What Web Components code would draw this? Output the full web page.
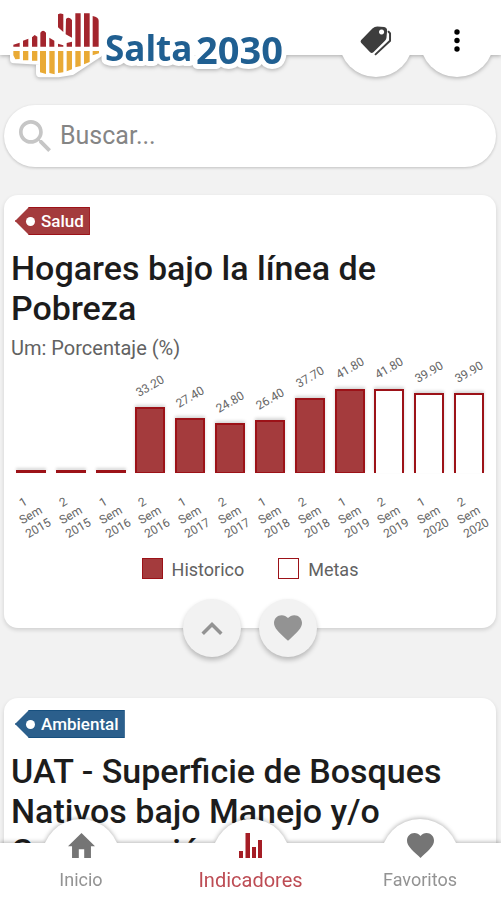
<!DOCTYPE html>
<html lang="es">
<head>
<meta charset="utf-8">
<meta name="viewport" content="width=device-width, initial-scale=1">
<title>Salta 2030</title>
<style>
  body {
    margin: 0;
    background: #f2f2f2;
    font-family: Roboto, "Liberation Sans", sans-serif;
    --red: #a43b3d;
    --red-dark: #9c1218;
    --blue: #2b5f8c;
    --blue-dark: #17507f;
  }
</style>
</head>
<body>
<salta-app>
  <salta-header slot="header">
    <round-button label="Categorías">
      <svg viewBox="178 73 98 94" width="32" height="31">
        <path fill="#3d3d3d" fill-rule="evenodd" d="M181 119 216 83Q223 77 231 77L252 79Q261 81 261 90L259 112Q258 118 253 122L219 156Q214 160 209 156L182 128Q178 123 181 119ZM244 86a8 8 0 1 0 .1 0Z"/>
        <path fill="none" stroke="#3d3d3d" stroke-width="6" d="M264 91 270 98V121L224 164"/>
      </svg>
    </round-button>
    <round-button label="Más opciones">
      <svg viewBox="0 0 8 24" width="8" height="24">
        <circle cx="4" cy="4" r="2.7"/><circle cx="4" cy="12.500" r="2.7"/><circle cx="4" cy="21" r="2.7"/>
      </svg>
    </round-button>
  </salta-header>

  <search-box placeholder="Buscar..."></search-box>

  <indicator-card category="Salud">
    <span slot="title">Hogares bajo la línea de Pobreza</span>
    <span slot="unit">Um: Porcentaje (%)</span>
    <bar-chart></bar-chart>
  </indicator-card>

  <indicator-card category="Ambiental" color="blue">
    <span slot="title">UAT - Superficie de Bosques Nativos bajo Manejo y/o Conservación</span>
  </indicator-card>

  <bottom-nav slot="footer">
    <nav-item href="#inicio" label="Inicio">
      <svg viewBox="2 3 20 17" width="27" height="25" preserveAspectRatio="none"><path fill="#757575" d="M10 20v-6h4v6h5v-8h3L12 3 2 12h3v8z"/></svg>
    </nav-item>
    <nav-item href="#indicadores" label="Indicadores" active>
      <svg viewBox="0 0 24 25" width="24" height="25"><path fill="#a51d25" d="M0 18h4v7H0zM6.500 0h4.500v25H6.500zM13 14h4v11h-4zM19 7h4v18h-4z"/></svg>
    </nav-item>
    <nav-item href="#favoritos" label="Favoritos">
      <svg viewBox="2 3 20 18.350" width="27" height="25"><path fill="#757575" d="M12 21.350l-1.450-1.320C5.400 15.360 2 12.280 2 8.500 2 5.420 4.420 3 7.500 3c1.740 0 3.410.81 4.500 2.090C13.090 3.810 14.760 3 16.500 3 19.580 3 22 5.420 22 8.500c0 3.780-3.400 6.860-8.550 11.540z"/></svg>
    </nav-item>
  </bottom-nav>
</salta-app>

<script>
class SaltaApp extends HTMLElement {
  constructor() {
    super();
    this.attachShadow({ mode: 'open' });
    this.shadowRoot.innerHTML = `
      <style>
        :host {
          display: grid;
          grid-template-rows: auto 1fr auto;
          height: 100vh;
        }
        main {
          min-height: 0;
          overflow-y: auto;
          scrollbar-width: none;
          padding: 50px 5px 0 4px;
        }
      </style>
      <slot name="header"></slot>
      <main><slot></slot></main>
      <slot name="footer"></slot>
    `;
  }
}
customElements.define('salta-app', SaltaApp);

class SaltaLogo extends HTMLElement {
  constructor() {
    super();
    this.attachShadow({ mode: 'open' });
    // white outline goes first, the coloured shapes are painted over it
    this.shadowRoot.innerHTML = `
      <style>
        :host { display: block; }
        svg { display: block; overflow: visible; }
        text {
          font-family: "Open Sans", "Noto Sans", sans-serif;
          font-weight: 700;
          fill: #205f91;
          stroke: #fff;
          stroke-width: 10px;
          stroke-linejoin: round;
          paint-order: stroke;
        }
        .outline { fill: #fff; stroke: #fff; stroke-width: 24; stroke-linejoin: round; }
      </style>
      <svg viewBox="0 0 300 84" width="300" height="84">
        <g transform="scale(.33333)">
          <path class="outline" d="M42 132 120 92 148 115 174 130V42L199 52 226 40H269L296 52V160L216 213 174 220H120V182L42 178Z"/>
          <path fill="#a3252d" d="M40 140V134L59 128V140ZM69 140V122L85 116V140ZM96 140V112L104 105 112 110V140ZM121 140V98Q129 86 138 98V140ZM148 140V113L163 122V140ZM174 140V131L190 136V140ZM200 140V129L216 125V140ZM174 43Q181 38 190 43V96L174 82ZM198 57Q206 48 216 60V113L197 103ZM226 40H242V140H226ZM252 40H269V140H252ZM278 48Q296 51 296 62V140H278Z"/>
          <path fill="#e9aa35" d="M40 153H59V177L46 178 40 166ZM69 153H85V181H69ZM96 153H112V182H96ZM120 153H138V222L120 217ZM148 153H164V223L148 219ZM174 153H190V217L174 219ZM200 153H216V208L200 214ZM226 153H242V198L226 202ZM252 153H269V186L252 193ZM278 153H297V160L278 166Z"/>
        </g>
        <text x="105" y="61" font-size="35">Salta</text>
        <text x="196" y="64" font-size="38">2030</text>
      </svg>
    `;
  }
}
customElements.define('salta-logo', SaltaLogo);

class SaltaHeader extends HTMLElement {
  constructor() {
    super();
    this.attachShadow({ mode: 'open' });
    this.shadowRoot.innerHTML = `
      <style>
        :host {
          display: block;
          position: relative;
          z-index: 2;
          height: 55px;
          background: #fff;
          filter: drop-shadow(0 1px 2px rgba(0, 0, 0, .3));
        }
        header {
          display: flex;
          justify-content: space-between;
          align-items: flex-start;
        }
        .buttons {
          display: flex;
          gap: 7px;
          padding: 3px 7px 0 0;
        }
      </style>
      <header>
        <salta-logo></salta-logo>
        <div class="buttons"><slot></slot></div>
      </header>
    `;
  }
}
customElements.define('salta-header', SaltaHeader);

class RoundButton extends HTMLElement {
  constructor() {
    super();
    this.attachShadow({ mode: 'open' });
  }

  connectedCallback() {
    const label = this.getAttribute('label') || '';
    this.shadowRoot.innerHTML = `
      <style>
        :host { display: block; }
        button {
          display: flex;
          justify-content: center;
          align-items: center;
          width: var(--size, 74px);
          height: var(--size, 74px);
          padding: 0;
          border: none;
          border-radius: 50%;
          background: var(--fill, #fff);
          box-shadow: var(--shadow, none);
          cursor: pointer;
        }
      </style>
      <button type="button" aria-label="${label}"><slot></slot></button>
    `;
  }
}
customElements.define('round-button', RoundButton);

class SearchBox extends HTMLElement {
  constructor() {
    super();
    this.attachShadow({ mode: 'open' });
  }

  connectedCallback() {
    this.shadowRoot.innerHTML = `
      <style>
        :host { display: block; margin-bottom: 28px; }
        label {
          display: flex;
          align-items: center;
          gap: 9px;
          height: 62px;
          padding: 0 15px;
          border-radius: 31px;
          background: #fff;
          box-shadow: 0 1px 3px rgba(0, 0, 0, .2);
        }
        input {
          flex: 1;
          min-width: 0;
          padding: 0;
          border: none;
          outline: none;
          background: none;
          color: #333;
          font: 25px/32px Roboto, sans-serif;
        }
        input::placeholder { color: #858585; opacity: 1; }
      </style>
      <label>
        <svg viewBox="3 3 17.500 17.500" width="32" height="32"><path fill="#c6c6c6" d="M15.500 14h-.79l-.28-.27C15.410 12.590 16 11.110 16 9.500 16 5.910 13.090 3 9.500 3S3 5.910 3 9.500 5.910 16 9.500 16c1.610 0 3.090-.59 4.230-1.570l.27.28v.79l5 4.990L20.490 19l-4.990-5zm-6 0C7.010 14 5 11.990 5 9.500S7.010 5 9.500 5 14 7.010 14 9.500 11.990 14 9.500 14z"/></svg>
        <input type="search" aria-label="Buscar" placeholder="${this.getAttribute('placeholder') || ''}">
      </label>
    `;
  }
}
customElements.define('search-box', SearchBox);

class CategoryTag extends HTMLElement {
  constructor() {
    super();
    this.attachShadow({ mode: 'open' });
    this.shadowRoot.innerHTML = `
      <style>
        :host { display: flex; }
        span {
          display: flex;
          align-items: center;
          gap: 6px;
          box-sizing: border-box;
          height: 28px;
          padding: 0 5px 0 10px;
          border: 1px solid var(--tag-dark);
          background: var(--tag);
          clip-path: polygon(0 50%, 14px 0, 100% 0, 100% 100%, 14px 100%);
          color: #fff;
          font-size: 17px;
          font-weight: 500;
          line-height: 20px;
        }
        span::before {
          content: "";
          width: 9px;
          height: 9px;
          border-radius: 50%;
          background: #fff;
        }
      </style>
      <span><slot></slot></span>
    `;
  }
}
customElements.define('category-tag', CategoryTag);

class IndicatorCard extends HTMLElement {
  constructor() {
    super();
    this.attachShadow({ mode: 'open' });
  }

  connectedCallback() {
    const color = this.getAttribute('color') || 'red';
    this.shadowRoot.innerHTML = `
      <style>
        :host { display: block; margin-bottom: 70px; }
        /* flow-root keeps the negative margin of the actions inside the card */
        article {
          display: flow-root;
          padding: 12px 7px 0;
          border-radius: 14px;
          background: #fff;
          box-shadow: 0 2px 4px rgba(0, 0, 0, .14);
        }
        category-tag {
          --tag: var(--${color});
          --tag-dark: var(--${color}-dark);
          margin: 0 4px 13px;
        }
        h2 {
          margin: 0 0 8px;
          color: #1c1c1c;
          font-size: 34px;
          font-weight: 500;
          line-height: 40px;
        }
        p {
          margin: 0;
          color: #626262;
          font-size: 20px;
          line-height: 24px;
        }
        .actions {
          display: flex;
          justify-content: center;
          gap: 18px;
          margin: 18px 0 -29px;
          --size: 58px;
          --fill: #f2f2f2;
          --shadow: 0 3px 5px rgba(0, 0, 0, .24);
        }
      </style>
      <article>
        <category-tag>${this.getAttribute('category')}</category-tag>
        <h2><slot name="title"></slot></h2>
        <p><slot name="unit"></slot></p>
        <slot></slot>
        <div class="actions">
          <round-button label="Contraer">
            <svg viewBox="6 8 12 7.410" width="22" height="13"><path fill="#939393" d="M12 8l-6 6 1.410 1.410L12 10.830l4.590 4.580L18 14z"/></svg>
          </round-button>
          <round-button label="Agregar a favoritos">
            <svg viewBox="2 3 20 18.350" width="28" height="26"><path fill="#939393" d="M12 21.350l-1.450-1.320C5.400 15.360 2 12.280 2 8.500 2 5.420 4.420 3 7.500 3c1.740 0 3.410.81 4.500 2.090C13.090 3.810 14.760 3 16.500 3 19.580 3 22 5.420 22 8.500c0 3.780-3.400 6.860-8.550 11.540z"/></svg>
          </round-button>
        </div>
      </article>
    `;
  }
}
customElements.define('indicator-card', IndicatorCard);

const SERIES = [
  { sem: 1, year: 2015, value: 0 },
  { sem: 2, year: 2015, value: 0 },
  { sem: 1, year: 2016, value: 0 },
  { sem: 2, year: 2016, value: 33.2 },
  { sem: 1, year: 2017, value: 27.4 },
  { sem: 2, year: 2017, value: 24.8 },
  { sem: 1, year: 2018, value: 26.4 },
  { sem: 2, year: 2018, value: 37.7 },
  { sem: 1, year: 2019, value: 41.8 },
  { sem: 2, year: 2019, value: 41.8, goal: true },
  { sem: 1, year: 2020, value: 39.9, goal: true },
  { sem: 2, year: 2020, value: 39.9, goal: true }
];

class BarChart extends HTMLElement {
  constructor() {
    super();
    this.attachShadow({ mode: 'open' });
  }

  connectedCallback() {
    const columns = SERIES.map(({ sem, year, value, goal }) => `
      <div class="column">
        <div class="plot">
          ${value ? `<span class="value">${value.toFixed(2)}</span>` : ''}
          <div class="bar ${goal ? 'goal' : ''}" style="height: ${Math.max(3, Math.round(value * 2))}px"></div>
        </div>
        <div class="tick">${sem}<br>Sem<br>${year}</div>
      </div>
    `).join('');

    this.shadowRoot.innerHTML = `
      <style>
        :host { display: block; }
        .columns {
          display: grid;
          grid-template-columns: repeat(12, 1fr);
          color: #666;
          font-size: 12px;
          text-align: center;
        }
        .plot {
          display: flex;
          flex-direction: column;
          justify-content: flex-end;
          align-items: center;
          height: 113px;
        }
        .value {
          margin-bottom: 14px;
          line-height: 14px;
          transform: rotate(-30deg);
        }
        .bar {
          box-sizing: border-box;
          width: 75%;
          border: 2px solid var(--red-dark);
          border-bottom-width: 1px;
          background: var(--red);
          box-shadow: 0 -2px 3px rgba(0, 0, 0, .16);
        }
        .goal {
          border-bottom: none;
          background: #fff;
        }
        .tick {
          margin-top: 20px;
          line-height: 15px;
          transform: rotate(-30deg);
        }
        .legend {
          display: flex;
          justify-content: center;
          gap: 34px;
          margin-top: 20px;
          color: #626262;
          font-size: 18px;
          line-height: 23px;
        }
        .legend span {
          display: flex;
          gap: 9px;
        }
        .legend span::before {
          content: "";
          box-sizing: border-box;
          width: 21px;
          height: 21px;
          border: 1px solid var(--red-dark);
          background: var(--key, #fff);
        }
      </style>
      <div class="columns">${columns}</div>
      <div class="legend">
        <span style="--key: var(--red)">Historico</span>
        <span>Metas</span>
      </div>
    `;
  }
}
customElements.define('bar-chart', BarChart);

class BottomNav extends HTMLElement {
  constructor() {
    super();
    this.attachShadow({ mode: 'open' });
    this.shadowRoot.innerHTML = `
      <style>
        :host {
          display: block;
          position: relative;
          z-index: 2;
          background: #fff;
          filter: drop-shadow(0 -1px 2px rgba(0, 0, 0, .28));
        }
        nav {
          display: flex;
          justify-content: space-between;
          padding: 0 29px;
        }
      </style>
      <nav><slot></slot></nav>
    `;
  }
}
customElements.define('bottom-nav', BottomNav);

class NavItem extends HTMLElement {
  constructor() {
    super();
    this.attachShadow({ mode: 'open' });
  }

  connectedCallback() {
    this.shadowRoot.innerHTML = `
      <style>
        :host { display: block; width: 104px; height: 57px; }
        a {
          display: flex;
          flex-direction: column;
          align-items: center;
          margin-top: -24px;
          color: #939393;
          font-size: 18px;
          line-height: 24px;
          text-decoration: none;
        }
        :host([active]) a {
          color: #bd4c54;
          font-size: 20px;
        }
        /* round bump that rises over the bar's upper edge */
        .icon {
          display: flex;
          justify-content: center;
          box-sizing: border-box;
          width: 78px;
          height: 78px;
          margin-bottom: -29px;
          padding-top: 14px;
          border-radius: 50%;
          background: #fff;
        }
      </style>
      <a href="${this.getAttribute('href')}">
        <span class="icon"><slot></slot></span>
        <span>${this.getAttribute('label')}</span>
      </a>
    `;
  }
}
customElements.define('nav-item', NavItem);
</script>
</body>
</html>
